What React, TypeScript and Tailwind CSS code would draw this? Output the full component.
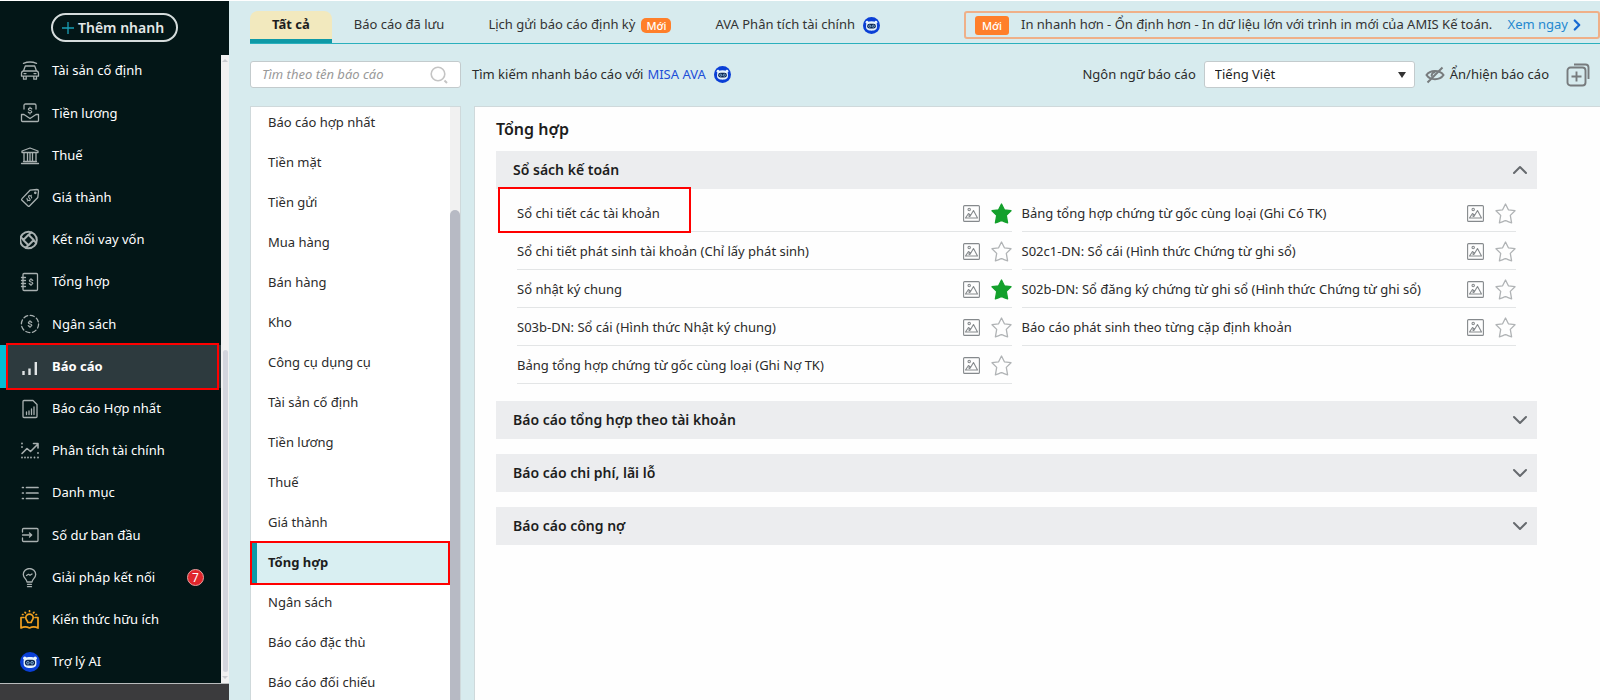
import type { ReactNode } from "react";
import { ChevronDown, ChevronRight, ChevronUp } from "lucide-react";

type MenuItem = { label: string; icon: ReactNode; active?: boolean; count?: number };
type Report = { name: string; starred?: boolean };

function Icon({ children }: { children: ReactNode }) {
  return (
    <svg
      viewBox="0 0 20 20"
      className="size-5"
      fill="none"
      stroke="currentColor"
      strokeWidth="1.3"
      strokeLinecap="round"
      strokeLinejoin="round"
    >
      {children}
    </svg>
  );
}

// S-shaped dollar sign shared by the money icons
function Dollar({ x, y }: { x: number; y: number }) {
  return (
    <g transform={`translate(${x} ${y})`} strokeWidth="1.1">
      <path d="M1.8 -1.5C1.5 -2.3 0.8 -2.4 0 -2.4C-1 -2.4 -1.7 -2 -1.7 -1.2C-1.7 0.3 1.8 -0.3 1.8 1.2C1.8 2 1 2.4 0 2.4C-0.9 2.4 -1.6 2.2 -1.8 1.5M0 -3.5V-2.4M0 2.4V3.5" />
    </g>
  );
}

function AvaIcon({ className }: { className: string }) {
  return (
    <svg viewBox="0 0 20 20" className={className}>
      <circle cx="10" cy="10" r="10" fill="#0a3fd6" />
      <circle cx="4.8" cy="6.2" r="1.7" fill="#e6f3fc" />
      <circle cx="15.2" cy="6.2" r="1.7" fill="#e6f3fc" />
      <path d="M3.6 9.5C3.6 6.4 6 5 10 5s6.4 1.4 6.400 4.500v2.300c0 3.200-2.700 4.300-6.400 4.300s-6.400-1.100-6.400-4.300z" fill="#e6f3fc" />
      <rect x="4.900" y="7.800" width="10.200" height="5.800" rx="2.800" fill="#0b2450" />
      <circle cx="7.9" cy="10.8" r="1.3" fill="none" stroke="#9fd3f5" strokeWidth="0.8" />
      <circle cx="12.1" cy="10.8" r="1.3" fill="none" stroke="#9fd3f5" strokeWidth="0.8" />
    </svg>
  );
}

const menu: MenuItem[] = [
  {
    label: "Tài sản cố định",
    icon: (
      <Icon>
        <path d="M3.500 2.400C7.500 0.700 12.500 0.700 16.500 2.400M5.300 5h9.400l1.800 5H3.500zM3.500 10C2 10.200 1.500 11 1.500 12.500v2.700h17v-2.700c0-1.500-.5-2.300-2-2.500M3.500 15.200v3h2.700v-3M13.800 15.200v3h2.700v-3M4 12.600h2M14 12.600h2" />
      </Icon>
    ),
  },
  {
    label: "Tiền lương",
    icon: (
      <Icon>
        <path d="M4 6V2.500C4 1.500 4.500 1 5.500 1h9c1 0 1.500.5 1.500 1.500V6M4 11.500H1.500v6c0 .7.300 1 1 1h15c.7 0 1-.3 1-1v-6H16L10 15.500z" />
        <Dollar x={10} y={7.5} />
      </Icon>
    ),
  },
  {
    label: "Thuế",
    icon: (
      <Icon>
        <path d="M2 6.500V5L10 2l8 3v1.500zM1.500 17.500h17M3.500 15.500h13M4 6.500v9M7.500 6.500v9M10 6.500v9M12.500 6.500v9M16 6.500v9" />
      </Icon>
    ),
  },
  {
    label: "Giá thành",
    icon: (
      <Icon>
        <path d="M10 2.200l7-.7c.9 0 1.500.6 1.500 1.500l-.7 6.500-8.300 8.500c-.5.5-1 .5-1.500 0L2 12.300c-.6-.6-.6-1.100 0-1.700z" />
        <circle cx="15.300" cy="4.800" r="0.700" />
        <g transform="rotate(35 10 10)">
          <Dollar x={9.5} y={10.5} />
        </g>
      </Icon>
    ),
  },
  {
    label: "Kết nối vay vốn",
    icon: (
      <Icon>
        <g strokeWidth="2">
          <circle cx="8.500" cy="10" r="8.300" />
          <path d="M8.500 4.800l5.200 5.200-5.200 5.200L3.300 10zM8.500 4.800L11.500 2.500M13.700 10l2.300 3M8.500 15.200l-3 2.300M3.300 10L1 7" />
        </g>
      </Icon>
    ),
  },
  {
    label: "Tổng hợp",
    icon: (
      <Icon>
        <path d="M4 1.500h12.500c.7 0 1 .3 1 1v15c0 .7-.3 1-1 1H4c-.7 0-1-.3-1-1v-15c0-.7.300-1 1-1zM1.500 5.500h4M1.500 8.500h4M1.500 11.500h4M1.500 14.500h4" />
        <Dollar x={11} y={10} />
      </Icon>
    ),
  },
  {
    label: "Ngân sách",
    icon: (
      <Icon>
        <circle cx="10" cy="10" r="8.600" strokeDasharray="4.200 2.550" />
        <Dollar x={10} y={10} />
      </Icon>
    ),
  },
  {
    label: "Báo cáo",
    active: true,
    icon: (
      <Icon>
        <path d="M3.500 14v4M9.500 11.500V18M15.800 5v13" strokeWidth="2.400" strokeLinecap="butt" />
      </Icon>
    ),
  },
  {
    label: "Báo cáo Hợp nhất",
    icon: (
      <Icon>
        <path d="M4 1.500h9l4 4v12c0 .7-.3 1-1 1H4c-.7 0-1-.3-1-1v-15c0-.7.3-1 1-1zM6.500 13v2.500M9 12v3.500M11.500 10v5.500M14 8v7.500" />
      </Icon>
    ),
  },
  {
    label: "Phân tích tài chính",
    icon: (
      <Icon>
        <path d="M2 12.500l5-5 3.500 3 7-7M13.500 2.500h4.500v4.500" strokeWidth="1.600" />
        <path d="M2 2.500v.1M2 6v.1M2 16.500v.1M5 16.500v.1M8 16.500v.1M11 16.500v.1M14.500 16.500v.1M18 16.500v.1M18 12v.1" strokeWidth="1.800" />
      </Icon>
    ),
  },
  {
    label: "Danh mục",
    icon: (
      <Icon>
        <path d="M2.500 4.500h.8M6.500 4.500h11.500M2.500 10h.8M6.500 10h11.500M2.500 15.500h.8M6.500 15.500h11.500" strokeWidth="1.700" />
      </Icon>
    ),
  },
  {
    label: "Số dư ban đầu",
    icon: (
      <Icon>
        <path d="M2.500 7V4.500c0-.7.3-1 1-1h13.500c.7 0 1 .3 1 1v11c0 .7-.3 1-1 1H3.500c-.7 0-1-.3-1-1V13M2.500 10h9M9.500 8l2.200 2-2.200 2" />
      </Icon>
    ),
  },
  {
    label: "Giải pháp kết nối",
    count: 7,
    icon: (
      <Icon>
        <path d="M7 14C7 11 3.300 10 3.300 6.500a6.200 6 0 0112.400 0C15.700 10 12 11 12 14zM7.500 16.300h4M7.500 18.700h4M6.500 7.500l2-1.200 1.500 1 2-1.300" />
      </Icon>
    ),
  },
  {
    label: "Kiến thức hữu ích",
    icon: (
      <span className="text-[#f0a020]">
        <Icon>
          <g strokeWidth="1.700">
            <path d="M4 7.500H1v10.500C4 16.500 7 16.700 9.500 18c2.500-1.300 5.500-1.500 8.500 0V7.500h-3M7.800 12.500c0-1.700-2-2.500-2-4.800a3.700 3.500 0 017.400 0c0 2.300-2 3.100-2 4.800zM9.500 .8v.6M5 2.300l.5.6M14 2.300l-.5.6M2.500 4.500h.5M16.500 4.500h-.5" />
          </g>
        </Icon>
      </span>
    ),
  },
  { label: "Trợ lý AI", icon: <AvaIcon className="size-5" /> },
];

const categories = [
  "Báo cáo hợp nhất",
  "Tiền mặt",
  "Tiền gửi",
  "Mua hàng",
  "Bán hàng",
  "Kho",
  "Công cụ dụng cụ",
  "Tài sản cố định",
  "Tiền lương",
  "Thuế",
  "Giá thành",
  "Tổng hợp",
  "Ngân sách",
  "Báo cáo đặc thù",
  "Báo cáo đối chiếu",
];

const leftReports: Report[] = [
  { name: "Sổ chi tiết các tài khoản", starred: true },
  { name: "Sổ chi tiết phát sinh tài khoản (Chỉ lấy phát sinh)" },
  { name: "Sổ nhật ký chung", starred: true },
  { name: "S03b-DN: Sổ cái (Hình thức Nhật ký chung)" },
  { name: "Bảng tổng hợp chứng từ gốc cùng loại (Ghi Nợ TK)" },
];

const rightReports: Report[] = [
  { name: "Bảng tổng hợp chứng từ gốc cùng loại (Ghi Có TK)" },
  { name: "S02c1-DN: Sổ cái (Hình thức Chứng từ ghi sổ)" },
  { name: "S02b-DN: Sổ đăng ký chứng từ ghi sổ (Hình thức Chứng từ ghi sổ)" },
  { name: "Báo cáo phát sinh theo từng cặp định khoản" },
];

const closedGroups = ["Báo cáo tổng hợp theo tài khoản", "Báo cáo chi phí, lãi lỗ", "Báo cáo công nợ"];

function Sidebar() {
  return (
    <aside className="flex w-[229px] shrink-0 flex-col bg-[#031617] text-white">
      <div className="flex min-h-0 flex-1">
        <div className="flex min-w-0 flex-1 flex-col">
          <div className="flex h-[49px] shrink-0 items-end pb-2 pl-[51px]">
            <button
              type="button"
              className="flex h-[29px] w-[127px] items-center gap-1 rounded-full border-2 border-[#d5dcdc] pl-[9px] text-sm font-semibold text-[#e4e8e8]"
            >
              <svg viewBox="0 0 12 12" className="size-3" stroke="#1a9fb5" strokeWidth="1.3">
                <path d="M6 0v12M0 6h12" />
              </svg>
              <span className="whitespace-nowrap">Thêm nhanh</span>
            </button>
          </div>
          <nav className="flex min-h-0 flex-1 flex-col">
            {menu.map((item) => (
              <a
                key={item.label}
                href="#"
                className={
                  item.active
                    ? "relative flex flex-1 items-center gap-3 border-l-6 border-[#00bcd4] bg-[#2d3a3e] pl-[14px] text-[13px] font-bold"
                    : "flex flex-1 items-center gap-3 pl-5 text-[13px]"
                }
              >
                <span className={item.active ? "text-[#e0e4e5]" : "text-[#a9b1b1]"}>{item.icon}</span>
                <span className="whitespace-nowrap">{item.label}</span>
                {item.count && (
                  <span className="mr-[17px] ml-auto flex size-[17px] items-center justify-center rounded-full border border-[#e8a0a0] bg-[#e0252b] text-xs">
                    {item.count}
                  </span>
                )}
                {item.active && <span className="absolute -inset-y-[2px] right-[2px] left-0 border-2 border-[#ff0000]" />}
              </a>
            ))}
          </nav>
        </div>
        <div className="mt-[54px] flex w-2 flex-col items-center justify-between bg-[#f1f1f1] pt-1 pb-1">
          <span className="border-x-3 border-b-3 border-x-transparent border-b-[#c9cbd0]" />
          <span className="mt-auto mb-1 h-[52%] w-[5px] rounded-full bg-[#d3d5dd]" />
          <span className="border-x-3 border-t-3 border-x-transparent border-t-[#c9cbd0]" />
        </div>
      </div>
      <div className="h-[17px] shrink-0 border-t border-[#b9bcbd] bg-[#3b3b3d]" />
    </aside>
  );
}

function Tabs() {
  return (
    <div className="ml-[21px] flex h-[33px] shrink-0 items-stretch border-b border-[#2ab0bd] text-[13px] whitespace-nowrap text-[#333]">
      <button
        type="button"
        className="rounded-t-lg border-b-4 border-[#0e9aa7] bg-[#f2e9be] px-[22px] font-bold text-[#1d1d1d]"
      >
        Tất cả
      </button>
      <button type="button" className="px-[22px] pb-1">
        Báo cáo đã lưu
      </button>
      <button type="button" className="flex items-center px-[22px] pb-1">
        Lịch gửi báo cáo định kỳ
        <span className="ml-[6px] rounded-[5px] bg-[#ff7f2a] px-[5px] text-[11px] leading-[15px] font-medium text-white">Mới</span>
      </button>
      <button type="button" className="flex items-center gap-2 px-[22px] pb-1">
        AVA Phân tích tài chính
        <AvaIcon className="size-[17px]" />
      </button>
      <div className="mb-1 ml-auto flex h-7 w-[636px] items-center rounded-[3px] border-2 border-[#efb088] pl-[9px]">
        <span className="mr-3 w-[34px] shrink-0 rounded-[3px] bg-[#ff7f2a] text-center text-[11px] leading-[19px] font-medium text-white">
          Mới
        </span>
        In nhanh hơn - Ổn định hơn - In dữ liệu lớn với trình in mới của AMIS Kế toán.
        <a href="#" className="mr-3 ml-auto flex items-center text-[#2588d0]">
          Xem ngay
          <ChevronRight className="size-[18px] text-[#1769d2]" strokeWidth={3} />
        </a>
      </div>
    </div>
  );
}

function Toolbar() {
  return (
    <div className="mt-[17px] mb-[18px] ml-[21px] flex h-[27px] shrink-0 items-center pr-[10px] text-[13px] whitespace-nowrap text-[#2b2b2b]">
      <label className="flex h-[27px] w-[211px] items-center rounded-[3px] border border-[#c3cbcd] bg-white pr-3 pl-[11px]">
        <input
          type="text"
          aria-label="Tìm theo tên báo cáo"
          placeholder="Tìm theo tên báo cáo"
          className="min-w-0 flex-1 text-[13px] italic outline-none placeholder:text-[#999]"
        />
        <svg viewBox="0 0 18 18" className="size-[18px]" fill="none" stroke="#c4c4c4" strokeWidth="1.6">
          <circle cx="8" cy="8" r="6.800" />
          <path d="M14.500 14.500l2.500 2.500" strokeWidth="2" />
        </svg>
      </label>
      <p className="ml-[11px] flex items-center">
        Tìm kiếm nhanh báo cáo với
        <a href="#" className="ml-1 flex items-center gap-2 text-[#1d4ed8]">
          MISA AVA
          <AvaIcon className="size-[17px]" />
        </a>
      </p>
      <label htmlFor="language" className="mr-2 ml-auto">
        Ngôn ngữ báo cáo
      </label>
      <div className="relative">
        <select
          id="language"
          defaultValue="vi"
          className="h-[27px] w-[211px] appearance-none rounded-[3px] border border-[#c3cbcd] bg-white px-[10px] text-[13px] text-[#1d1d1d]"
        >
          <option value="vi">Tiếng Việt</option>
        </select>
        <svg viewBox="0 0 8 6" className="pointer-events-none absolute top-[11px] right-[9px] h-[6px] w-2" fill="#333">
          <path d="M0 0h8L4 6z" />
        </svg>
      </div>
      <button type="button" className="ml-[10px] flex items-center gap-[5px]">
        <svg viewBox="0 0 20 18" className="h-[18px] w-5" fill="none" stroke="#777b7d" strokeWidth="2">
          <path d="M1.500 9C5 3.500 15 3.500 18.500 9C15 14.500 5 14.500 1.500 9zM2.500 16.500L17.500 1.500" />
          <path d="M7 10.500a3 3 0 013.500-4.200" />
        </svg>
        Ẩn/hiện báo cáo
      </button>
      <button type="button" aria-label="Thêm báo cáo" className="ml-[17px]">
        <svg viewBox="0 0 24 24" className="size-6" fill="none" stroke="#777b7d" strokeWidth="1.900">
          <rect x="1.500" y="4.500" width="18" height="18" rx="3" />
          <path d="M8 1.500h11.500a3 3 0 013 3V16M10.500 8.500v10M5.500 13.500h10" />
        </svg>
      </button>
    </div>
  );
}

function Categories() {
  return (
    <nav className="flex w-[211px] shrink-0 border-x border-t border-[#cfd9db] bg-white">
      <div className="min-h-0 flex-1">
        {/* list is scrolled a few pixels */}
        <div className="-mt-1">
          {categories.map((name) =>
            name === "Tổng hợp" ? (
              <a
                key={name}
                href="#"
                className="relative flex h-10 items-center border-l-6 border-[#0e9aa7] bg-[#d9eff2] pl-[11px] text-[13px] font-bold text-[#1d1d1d]"
              >
                {name}
                <span className="absolute -inset-y-[2px] right-0 -left-[7px] border-2 border-[#ff0000]" />
              </a>
            ) : (
              <a key={name} href="#" className="flex h-10 items-center pl-[17px] text-[13px] text-[#2b2b2b]">
                {name}
              </a>
            ),
          )}
        </div>
      </div>
      <div className="w-[10px] bg-[#f1f1f1] pt-[103px]">
        <div className="h-full rounded-t-full bg-[#b7bac4]" />
      </div>
    </nav>
  );
}

function ReportRow({ report, marked }: { report: Report; marked?: boolean }) {
  return (
    <li className="relative flex h-[38px] items-center border-b border-[#e3e5e6] pt-[2px]">
      {marked && <span className="pointer-events-none absolute -top-[7px] -left-[19px] h-[46px] w-[193px] border-2 border-[#ff0000]" />}
      <a href="#" className="min-w-0 flex-1 whitespace-nowrap">
        {report.name}
      </a>
      <button type="button" aria-label="Xem mẫu" className="mr-[11px]">
        <svg viewBox="0 0 17 17" className="size-[17px]" fill="none" stroke="#85898c" strokeWidth="1.100">
          <rect x="0.600" y="0.600" width="15.800" height="15.800" rx="1" />
          <circle cx="6.200" cy="4.500" r="1.200" />
          <path d="M2.500 13l3-4.500 2 2 3-5L14.500 13zM5.500 10.500l1 1 1.200-1" strokeLinejoin="round" />
        </svg>
      </button>
      <button type="button" aria-label="Yêu thích">
        <svg
          viewBox="0 0 21 21"
          className="size-[21px]"
          fill={report.starred ? "#14a02c" : "none"}
          stroke={report.starred ? "#14a02c" : "#b0b3b5"}
          strokeWidth="1.300"
          strokeLinejoin="round"
        >
          <path d="M10.500 1l2.900 5.800 6.600.9-4.700 4.700 1.300 7.400c-2-.3-4-1.500-6.100-2.100-2.100.6-4.100 1.800-6.100 2.100l1.300-7.400L1 7.700l6.600-.9z" />
        </svg>
      </button>
    </li>
  );
}

function Reports() {
  return (
    <main className="min-w-0 flex-1 border-t border-l border-[#cfd9db] bg-[#fefefe] pr-[63px] pl-[21px]">
      <h1 className="flex h-11 items-center text-base font-semibold text-[#1d1d1d]">Tổng hợp</h1>
      <section>
        <button
          type="button"
          className="flex h-[38px] w-full items-center justify-between bg-[#ecedef] pr-[5px] pl-[17px] text-sm font-semibold text-[#1d1d1d]"
        >
          Sổ sách kế toán
          <ChevronUp className="size-6 text-[#666a6e]" />
        </button>
        <div className="grid grid-cols-2 gap-[10px] px-[21px] pt-[5px] pb-[17px] text-[13px] text-[#2b2b2b]">
          <ul>
            {leftReports.map((report, i) => (
              <ReportRow key={report.name} report={report} marked={i === 0} />
            ))}
          </ul>
          <ul>
            {rightReports.map((report) => (
              <ReportRow key={report.name} report={report} />
            ))}
          </ul>
        </div>
      </section>
      <div className="flex flex-col gap-[15px]">
        {closedGroups.map((title) => (
          <button
            key={title}
            type="button"
            className="flex h-[38px] w-full items-center justify-between bg-[#ecedef] pr-[5px] pl-[17px] text-sm font-semibold text-[#1d1d1d]"
          >
            {title}
            <ChevronDown className="size-6 text-[#666a6e]" />
          </button>
        ))}
      </div>
    </main>
  );
}

export default function App() {
  return (
    <div className="flex h-screen overflow-hidden border-t border-white bg-[#d7ebee] font-['Noto_Sans','Open_Sans',sans-serif]">
      <Sidebar />
      <div className="flex min-w-0 flex-1 flex-col pt-[10px]">
        <Tabs />
        <Toolbar />
        <div className="ml-[21px] flex min-h-0 flex-1 gap-[13px] overflow-hidden">
          <Categories />
          <Reports />
        </div>
      </div>
    </div>
  );
}
